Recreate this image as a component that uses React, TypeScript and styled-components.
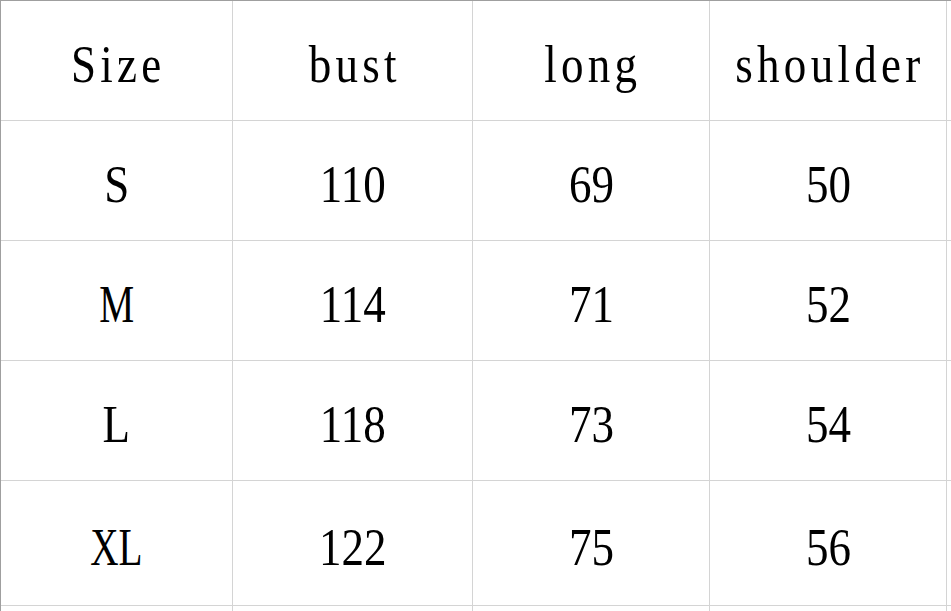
import styled, { createGlobalStyle } from 'styled-components';

const GlobalStyle = createGlobalStyle`
  html, body {
    margin: 0;
    padding: 0;
    background: #fff;
    overflow: hidden;
  }
`;

const headers = ['Size', 'bust', 'long', 'shoulder'];

const rows = [
  ['S', '110', '69', '50'],
  ['M', '114', '71', '52'],
  ['L', '118', '73', '54'],
  ['XL', '122', '75', '56'],
];

const Sheet = styled.div`
  display: grid;
  grid-template-columns: 232px 240px 237px 237px 120px;
  grid-template-rows: 120px 120px 120px 120px 125px 120px;
  width: max-content;
  border-top: 1px solid #9f9f9f;
  border-left: 1px solid #9f9f9f;
`;

const Cell = styled.div`
  display: flex;
  align-items: center;
  justify-content: center;
  box-sizing: border-box;
  padding-top: 8px;
  border-right: 1px solid #d4d4d4;
  border-bottom: 1px solid #d4d4d4;
  font-family: "Liberation Serif", "Times New Roman", serif;
  font-size: 53px;
  line-height: 1;
  color: #000;
  white-space: nowrap;
`;

// narrow, evenly spaced glyphs like the spreadsheet's font
const Value = styled.span<{ $spacing: number; $narrow?: boolean }>`
  display: inline-block;
  transform: scaleX(${(p) => (p.$narrow ? 0.74 : 0.85)});
  letter-spacing: ${(p) => p.$spacing}px;
  padding-left: ${(p) => p.$spacing}px;
`;

const spacingFor = (text: string) => {
  if (/^\d+$/.test(text)) return 0;
  if (text.length <= 2) return 0;
  return 5;
};

const SizeChart = () => {
  const all = [headers, ...rows, ['', '', '', '']];
  return (
    <Sheet>
      {all.map((row, r) => (
        [...row, ''].map((value, c) => (
          <Cell key={`${r}-${c}`}>
            {value && (
              <Value $spacing={spacingFor(value)} $narrow={value === 'XL' || value === 'M'}>
                {value}
              </Value>
            )}
          </Cell>
        ))
      ))}
    </Sheet>
  );
};

export default function App() {
  return (
    <>
      <GlobalStyle />
      <SizeChart />
    </>
  );
}
